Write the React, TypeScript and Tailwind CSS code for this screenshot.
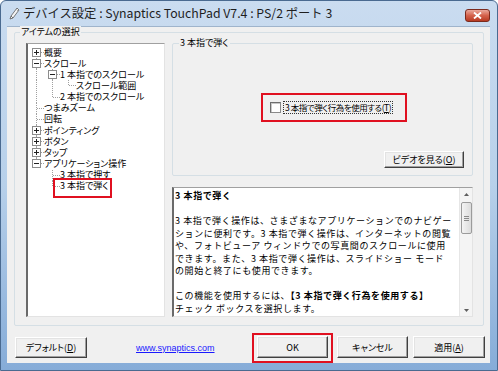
import React from 'react';

type V = 'full' | 'top' | 'bottom' | 'none';

function Cell({ v = 'none', h = false, box }: { v?: V; h?: boolean; box?: '+' | '-' }) {
  const c = '#a0a0a0';
  return (
    <svg width="16" height="11" viewBox="0 0 16 11" className="shrink-0 block" shapeRendering="crispEdges">
      {v === 'full' && <line x1="8.5" y1="0" x2="8.5" y2="11" stroke={c} strokeDasharray="1 1" />}
      {v === 'top' && <line x1="8.5" y1="0" x2="8.5" y2="6" stroke={c} strokeDasharray="1 1" />}
      {v === 'bottom' && <line x1="8.5" y1="5" x2="8.5" y2="11" stroke={c} strokeDasharray="1 1" />}
      {h && <line x1="9" y1="5.5" x2="16" y2="5.5" stroke={c} strokeDasharray="1 1" />}
      {box && (
        <>
          <rect x="4.5" y="1.5" width="8" height="8" fill="#fff" stroke="#8c8c8c" />
          <line x1="6" y1="5.5" x2="11" y2="5.5" stroke="#222" />
          {box === '+' && <line x1="8.5" y1="3" x2="8.5" y2="8" stroke="#222" />}
        </>
      )}
    </svg>
  );
}

type Row = { cells: { v?: V; h?: boolean; box?: '+' | '-' }[]; text: string; mark?: boolean };

const rows: Row[] = [
  { cells: [{ v: 'bottom', h: true, box: '+' }], text: '概要' },
  { cells: [{ v: 'full', h: true, box: '-' }], text: 'スクロール' },
  { cells: [{ v: 'full' }, { v: 'full', h: true, box: '-' }], text: '1 本指でのスクロール' },
  { cells: [{ v: 'full' }, { v: 'full' }, { v: 'top', h: true }], text: 'スクロール範囲' },
  { cells: [{ v: 'full' }, { v: 'top', h: true }], text: '2 本指でのスクロール' },
  { cells: [{ v: 'full', h: true }], text: 'つまみズーム' },
  { cells: [{ v: 'full', h: true }], text: '回転' },
  { cells: [{ v: 'full', h: true, box: '+' }], text: 'ポインティング' },
  { cells: [{ v: 'full', h: true, box: '+' }], text: 'ボタン' },
  { cells: [{ v: 'full', h: true, box: '+' }], text: 'タップ' },
  { cells: [{ v: 'top', h: true, box: '-' }], text: 'アプリケーション操作' },
  { cells: [{}, { v: 'full', h: true }], text: '3 本指で押す' },
  { cells: [{}, { v: 'top', h: true }], text: '3 本指で弾く', mark: true },
];

function Btn({ children, className = '' }: { children: React.ReactNode; className?: string }) {
  return (
    <div
      className={`flex items-center justify-center bg-[#f0f0f0] border border-t-[#ffffff] border-l-[#ffffff] border-r-[#404040] border-b-[#404040] shadow-[inset_-1px_-1px_0_#a0a0a0,inset_1px_1px_0_#e3e3e3] text-[9px] leading-none text-black [font-feature-settings:'palt'] ${className}`}
    >
      {children}
    </div>
  );
}

export default function App() {
  return (
    <div className="w-[498px] h-[371px] overflow-hidden font-['Noto_Sans_CJK_JP',sans-serif] text-black">
      <div className="w-[498px] h-[371px] flex flex-col border border-[#4a6a90] rounded-t-[6px] bg-gradient-to-b from-[#cadcf0] via-[#b7d0ea] to-[#86acd8]">
        {/* Title bar */}
        <div className="h-[25px] flex items-center shrink-0">
          <svg width="12" height="13" viewBox="0 0 12 13" className="ml-[7px]">
            <path d="M9 1 L11 3 L5 11 L2 12 L3 9 Z" fill="#f4f4f4" stroke="#5a5a5a" strokeWidth="0.8" />
            <path d="M3 9 L5 11" stroke="#5a5a5a" strokeWidth="0.8" />
            <path d="M8.5 2.5 L10 4" stroke="#9a9a9a" strokeWidth="0.8" />
          </svg>
          <div className="ml-[3px] text-[12.3px] leading-none text-[#1e1e1e] whitespace-nowrap">
            デバイス設定 : Synaptics TouchPad V7.4 : PS/2 ポート 3
          </div>
          <div className="ml-auto mr-[7px] mt-[4px] w-[25px] h-[13px] rounded-[3px] border border-[#7b2a1d] bg-gradient-to-b from-[#e9a89c] via-[#d4624c] to-[#b73a22] flex items-center justify-center">
            <svg width="9" height="7" viewBox="0 0 9 7">
              <path d="M1 0.5 L8 6.5 M8 0.5 L1 6.5" stroke="#fff" strokeWidth="1.8" />
            </svg>
          </div>
        </div>

        {/* Client area */}
        <div className="ml-[6px] w-[483px] h-[337px] bg-[#f0f0f0] flex flex-col border-t border-[#9fb4cc]">
          {/* Outer group box */}
          <div className="relative ml-[7px] mt-[5px] w-[470px] h-[294px] border border-[#d5dfe5] rounded-[2px] flex pl-[11px] pt-[10px] pr-[10px]">
            <div className="absolute left-[5px] top-[-7px] px-[1px] bg-[#f0f0f0] text-[9px] leading-[12px] [font-feature-settings:'palt']">
              アイテムの選択
            </div>

            {/* Tree view */}
            <div className="relative w-[139px] h-[274px] bg-white border border-[#a0a0a0] border-l-2 border-l-[#6a6a6a] border-r-[#e3e3e3] border-b-[#e3e3e3] pt-[3px]">
              {rows.map((r, i) => (
                <div key={i} className="flex h-[11.15px] items-center">
                  {r.cells.map((c, j) => (
                    <Cell key={j} {...c} />
                  ))}
                  <div className="relative h-[10px] text-[9px] leading-[10px] whitespace-nowrap [font-feature-settings:'palt']">
                    {r.text}
                    {r.mark && (
                      <div className="absolute left-[-7px] top-[-3px] w-[59px] h-[20px] border-2 border-[#e01020]" />
                    )}
                  </div>
                </div>
              ))}
            </div>

            {/* Right column */}
            <div className="ml-[7px] w-[301px] flex flex-col">
              <div className="relative h-[133px] border border-[#d5dfe5] rounded-[2px] flex flex-col">
                <div className="absolute left-[6px] top-[-7px] px-[1px] bg-[#f0f0f0] text-[9px] leading-[12px] [font-feature-settings:'palt']">
                  3 本指で弾く
                </div>
                <div className="mt-[49px] ml-[88px] w-[146px] h-[29px] border-2 border-[#e01020] flex items-center pl-[7px]">
                  <div className="w-[11px] h-[11px] bg-white border border-[#8a8a8a] border-t-[#6e6e6e] border-l-[#6e6e6e] shadow-[inset_1px_1px_0_#c8c8c8]" />
                  <div className="ml-[2px] border border-dotted border-[#333] px-[1px] text-[8.5px] leading-[11px] tracking-[-0.45px] whitespace-nowrap [font-feature-settings:'palt']">
                    3 本指で弾く行為を使用する(<u>T</u>)
                  </div>
                </div>
                <Btn className="mt-[29px] self-end mr-[8px] w-[80px] h-[17px]">
                  ビデオを見る(<u>O</u>)
                </Btn>
              </div>

              {/* Description box */}
              <div className="mt-[11px] h-[130px] bg-white border border-[#a0a0a0] border-l-2 border-l-[#6a6a6a] border-r-[#e3e3e3] border-b-[#e3e3e3] flex">
                <div className="flex-1 pl-[1px] pt-[2px] text-[9px] leading-[12.5px] tracking-[0.6px] whitespace-nowrap overflow-hidden">
                  <div className="font-bold">3 本指で弾く</div>
                  <div className="h-[12.5px]" />
                  <div>3 本指で弾く操作は、さまざまなアプリケーションでのナビゲー</div>
                  <div>ションに便利です。3 本指で弾く操作は、インターネットの閲覧</div>
                  <div>や、フォトビューア ウィンドウでの写真間のスクロールに使用</div>
                  <div>できます。また、3 本指で弾く操作は、スライドショー モード</div>
                  <div>の開始と終了にも使用できます。</div>
                  <div className="h-[12.5px]" />
                  <div>
                    この機能を使用するには、<span className="font-bold">【3 本指で弾く行為を使用する】</span>
                  </div>
                  <div>チェック ボックスを選択します。</div>
                </div>
                {/* Scrollbar */}
                <div className="w-[13px] bg-[#f4f4f4] border-l border-[#e6e6e6] flex flex-col items-center">
                  <div className="h-[12px] w-full flex items-center justify-center">
                    <svg width="5" height="3" viewBox="0 0 5 3"><path d="M0 3 L2.5 0 L5 3 Z" fill="#5e5e5e" /></svg>
                  </div>
                  <div className="mt-[2px] w-[11px] h-[32px] rounded-[2px] border border-[#9b9b9b] bg-gradient-to-r from-[#f4f4f4] to-[#dcdcdc] flex flex-col items-center justify-center gap-[1px]">
                    <div className="w-[5px] h-px bg-[#8a8a8a]" />
                    <div className="w-[5px] h-px bg-[#8a8a8a]" />
                    <div className="w-[5px] h-px bg-[#8a8a8a]" />
                  </div>
                  <div className="flex-1" />
                  <div className="h-[12px] w-full flex items-center justify-center">
                    <svg width="5" height="3" viewBox="0 0 5 3"><path d="M0 0 L2.5 3 L5 0 Z" fill="#5e5e5e" /></svg>
                  </div>
                </div>
              </div>
            </div>
          </div>

          {/* Bottom buttons */}
          <div className="mt-[7px] h-[30px] flex items-start">
            <Btn className="ml-[8px] mt-[4px] w-[72px] h-[21px]">
              デフォルト(<u>D</u>)
            </Btn>
            <div className="ml-[49px] self-center text-[9px] leading-none text-[#1a1aff] underline font-['Liberation_Sans',sans-serif]">
              www.synaptics.com
            </div>
            <div className="ml-auto w-[81px] h-[30px] border-2 border-[#e01020] pt-[1px] px-[3px]">
              <Btn className="w-[71px] h-[22px] border-r-[#202020] border-b-[#202020]">OK</Btn>
            </div>
            <Btn className="ml-[4px] mt-[3px] w-[71px] h-[22px]">キャンセル</Btn>
            <Btn className="ml-[5px] mt-[3px] w-[72px] h-[22px] mr-[5px]">
              適用(<u>A</u>)
            </Btn>
          </div>
        </div>
      </div>
    </div>
  );
}
